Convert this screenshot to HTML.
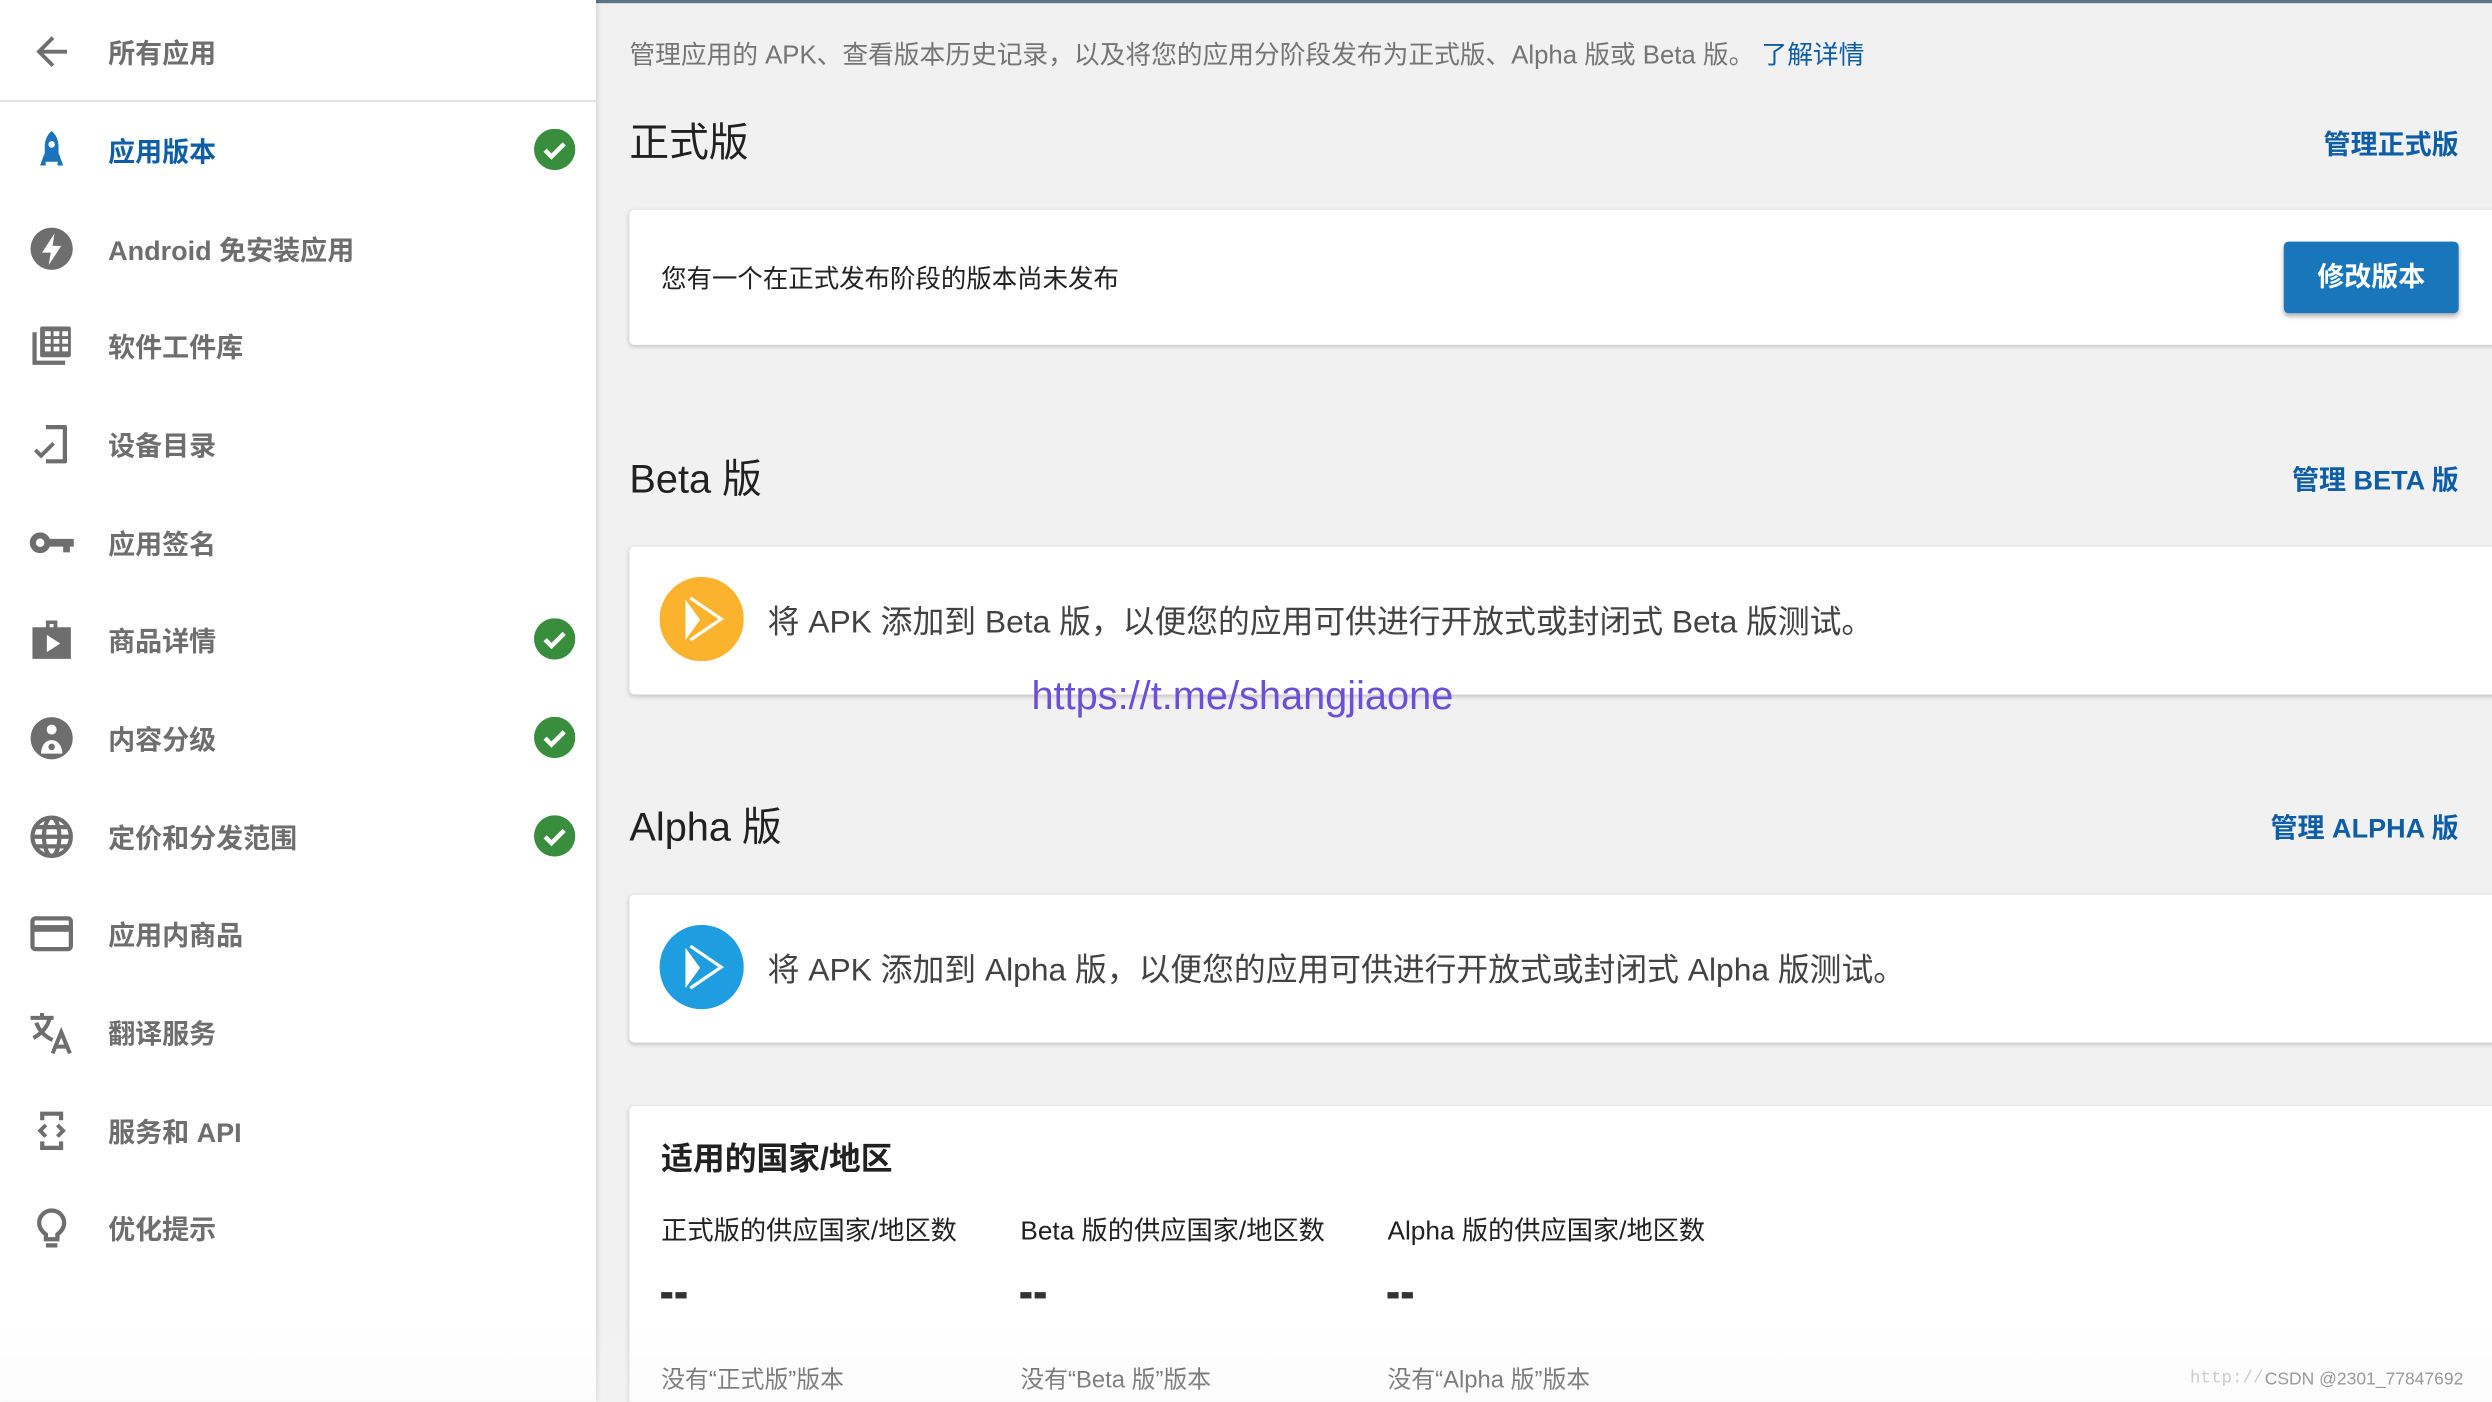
<!DOCTYPE html>
<html><head><meta charset="utf-8"><style>
*{margin:0;padding:0;box-sizing:border-box}
html,body{width:2492px;height:1402px;overflow:hidden;background:#f1f1f1}
#root{position:absolute;left:0;top:0;width:1568px;height:882px;overflow:hidden;transform:scale(1.5893);transform-origin:0 0;font-family:"Liberation Sans","Noto Sans CJK SC",sans-serif;background:#f1f1f1}
.abs{position:absolute;white-space:nowrap}
#side{position:absolute;left:0;top:0;width:375px;height:882px;background:#fff;box-shadow:1px 0 3px rgba(0,0,0,.15)}
.it{position:absolute;left:0;width:375px;height:40px}
.it .t{position:absolute;left:68px;top:50%;transform:translateY(-50%);font-size:17px;font-weight:bold;color:#6e6e6e}
.it svg.ic{position:absolute;left:18px;top:6px;width:29px;height:29px}
.chk{position:absolute;left:336px;top:7px;width:26px;height:26px}
.card{position:absolute;left:396px;width:1180px;background:#fff;border-radius:3px;box-shadow:0 1px 3px rgba(0,0,0,.2)}
.h{font-size:25px;color:#212121}
.mg{font-size:17px;font-weight:bold;color:#0d5ea6;right:21px}
</style></head><body><div id="root">
<div class="abs" style="left:375px;top:0;width:1193px;height:2px;background:#5a7485"></div>
<div id="side">
<div style="position:absolute;left:0;top:63px;width:375px;height:1px;background:#ddd"></div>
<div class="it" style="top:12px"><svg class="ic" viewBox="0 0 24 24"><path d="M20 11H7.8l5.6-5.6L12 4l-8 8 8 8 1.4-1.4L7.8 13H20z" fill="#6e6e6e"/></svg><span class="t">所有应用</span></div>
<div class="it" style="top:74px"><svg class="ic" viewBox="0 0 24 24"><path d="M12 2c-2.5 2-3.6 5-3.6 8.5V18h7.2v-7.5C15.6 7 14.5 4 12 2z" fill="#1a73bb"/><circle cx="12" cy="9" r="1.7" fill="#fff"/><path d="M8.3 13.5L6 20h3zM15.7 13.5L18 20h-3z" fill="#1a73bb"/></svg><span class="t" style="color:#0d5ea6">应用版本</span><svg class="chk" viewBox="0 0 26 26"><circle cx="13" cy="13" r="13" fill="#388e3c"/><path d="M7 13.5l4 4 8-8" stroke="#fff" stroke-width="2.8" fill="none"/></svg></div>
<div class="it" style="top:136px"><svg class="ic" viewBox="0 0 24 24"><circle cx="12" cy="12" r="11" fill="#6e6e6e"/><path d="M13.5 4l-6.5 10h4.5l-1 6.5 6.5-10h-4.5z" fill="#fff"/></svg><span class="t">Android 免安装应用</span></div>
<div class="it" style="top:197px"><svg class="ic" viewBox="0 0 24 24"><path d="M2 5h2.2v14.8H19V22H2z" fill="#6e6e6e"/><rect x="6" y="2" width="16" height="16" rx="1" fill="#6e6e6e"/><path d="M8.5 4.5h3v2.5h-3zm4.5 0h3v2.5h-3zm4.5 0h3v2.5h-3zM8.5 8.5h3V11h-3zm4.5 0h3V11h-3zm4.5 0h3V11h-3zM8.5 12.5h3V15h-3zm4.5 0h3V15h-3zm4.5 0h3V15h-3z" fill="#fff"/></svg><span class="t">软件工件库</span></div>
<div class="it" style="top:259px"><svg class="ic" viewBox="0 0 24 24"><path d="M9 2h10a1 1 0 011 1v18a1 1 0 01-1 1H9v-2.2h8.8V4.2H9z" fill="#6e6e6e"/><path d="M3.5 15l3 3 6.5-6.5" stroke="#6e6e6e" stroke-width="2" fill="none"/></svg><span class="t">设备目录</span></div>
<div class="it" style="top:321px"><svg class="ic" viewBox="0 0 24 24"><circle cx="6" cy="12" r="3.8" fill="none" stroke="#6e6e6e" stroke-width="3.2"/><path d="M9.5 10h14v4h-2v3h-3.5v-3h-8.5z" fill="#6e6e6e"/></svg><span class="t">应用签名</span></div>
<div class="it" style="top:382px"><svg class="ic" viewBox="0 0 24 24"><path d="M9 2h6v3.5h7V22H2V5.5h7zm2 1.8v1.7h2V3.8z" fill="#6e6e6e"/><path d="M9.5 9.5v9l7-4.5z" fill="#fff"/></svg><span class="t">商品详情</span><svg class="chk" viewBox="0 0 26 26"><circle cx="13" cy="13" r="13" fill="#388e3c"/><path d="M7 13.5l4 4 8-8" stroke="#fff" stroke-width="2.8" fill="none"/></svg></div>
<div class="it" style="top:444px"><svg class="ic" viewBox="0 0 24 24"><circle cx="12" cy="12" r="11" fill="#6e6e6e"/><circle cx="12" cy="7.5" r="2.6" fill="#fff"/><path d="M6.5 20c0-4 2.2-7 5.5-7s5.5 3 5.5 7z" fill="#fff"/><circle cx="12" cy="16.5" r="1.7" fill="#6e6e6e"/></svg><span class="t">内容分级</span><svg class="chk" viewBox="0 0 26 26"><circle cx="13" cy="13" r="13" fill="#388e3c"/><path d="M7 13.5l4 4 8-8" stroke="#fff" stroke-width="2.8" fill="none"/></svg></div>
<div class="it" style="top:506px"><svg class="ic" viewBox="0 0 24 24" fill="none" stroke="#6e6e6e" stroke-width="2.2"><circle cx="12" cy="12" r="10"/><ellipse cx="12" cy="12" rx="4" ry="10"/><path d="M2 12h20M3.5 7h17M3.5 17h17"/></svg><span class="t">定价和分发范围</span><svg class="chk" viewBox="0 0 26 26"><circle cx="13" cy="13" r="13" fill="#388e3c"/><path d="M7 13.5l4 4 8-8" stroke="#fff" stroke-width="2.8" fill="none"/></svg></div>
<div class="it" style="top:567px"><svg class="ic" viewBox="0 0 24 24"><rect x="2" y="4" width="20" height="16" rx="1.5" fill="none" stroke="#6e6e6e" stroke-width="2.2"/><rect x="2" y="7.5" width="20" height="3.5" fill="#6e6e6e"/></svg><span class="t">应用内商品</span></div>
<div class="it" style="top:629px"><svg class="ic" viewBox="0 0 24 24" fill="none" stroke="#6e6e6e" stroke-width="2.1"><path d="M1 4.5h12M7 2v2.5M2.5 15c4.5-2.5 7.5-6 8.5-10.5M4 7c1.5 4 4 7 8.5 9M12.5 23l4.5-11 4.5 11M14 19.5h6"/></svg><span class="t">翻译服务</span></div>
<div class="it" style="top:691px"><svg class="ic" viewBox="0 0 24 24"><path d="M6 2h12v4.5h-2.2V4.2H8.2v2.3H6zM6 17.5h2.2v2.3h7.6v-2.3H18V22H6z" fill="#6e6e6e"/><path d="M9 9l-3 3 3 3M15 9l3 3-3 3" stroke="#6e6e6e" stroke-width="2" fill="none"/></svg><span class="t">服务和 API</span></div>
<div class="it" style="top:752px"><svg class="ic" viewBox="0 0 24 24" fill="none" stroke="#6e6e6e" stroke-width="2.2"><path d="M9 18v-2.5C7 14 5.5 12 5.5 9.5a6.5 6.5 0 0113 0c0 2.5-1.5 4.5-3.5 6V18zM9 21.2h6"/></svg><span class="t">优化提示</span></div>
</div>

<div class="abs" style="left:396px;top:21px;font-size:16.2px;color:#757575">管理应用的 APK、查看版本历史记录，以及将您的应用分阶段发布为正式版、Alpha 版或 Beta 版。 <span style="color:#0d5ea6">了解详情</span></div>

<div class="abs h" style="left:396px;top:70px">正式版</div>
<div class="abs mg" style="top:77px">管理正式版</div>
<div class="card" style="top:132px;height:85px">
<div class="abs" style="left:20px;top:30px;font-size:16px;color:#212121">您有一个在正式发布阶段的版本尚未发布</div>
<div class="abs" style="left:1041px;top:20px;width:110px;height:45px;background:#1976bb;border-radius:3px;box-shadow:0 2px 3px rgba(0,0,0,.3);color:#fff;font-weight:bold;font-size:17px;text-align:center;line-height:45px">修改版本</div>
</div>

<div class="abs h" style="left:396px;top:282px">Beta 版</div>
<div class="abs mg" style="top:288px">管理 BETA 版</div>
<div class="card" style="top:344px;height:93px">
<svg class="abs" style="left:19px;top:19px" width="53" height="53" viewBox="0 0 52 52"><circle cx="26" cy="26" r="26" fill="#fbb22d"/><path d="M16 14v25l9-12.5z" fill="#fff"/><path d="M19 13l19 13-19 13" stroke="#fff" stroke-width="2" fill="none"/></svg>
<div class="abs" style="left:87px;top:31px;font-size:20px;color:#424242">将 APK 添加到 Beta 版，以便您的应用可供进行开放式或封闭式 Beta 版测试。</div>
</div>
<div class="abs" style="left:649px;top:424px;font-size:25px;color:#6a4fd8">https://t.me/shangjiaone</div>

<div class="abs h" style="left:396px;top:501px">Alpha 版</div>
<div class="abs mg" style="top:507px">管理 ALPHA 版</div>
<div class="card" style="top:563px;height:93px">
<svg class="abs" style="left:19px;top:19px" width="53" height="53" viewBox="0 0 52 52"><circle cx="26" cy="26" r="26" fill="#1e9de0"/><path d="M16 14v25l9-12.5z" fill="#fff"/><path d="M19 13l19 13-19 13" stroke="#fff" stroke-width="2" fill="none"/></svg>
<div class="abs" style="left:87px;top:31px;font-size:20px;color:#424242">将 APK 添加到 Alpha 版，以便您的应用可供进行开放式或封闭式 Alpha 版测试。</div>
</div>

<div class="card" style="top:696px;height:200px">
<div class="abs" style="left:20px;top:17px;font-size:20px;font-weight:bold;color:#212121">适用的国家/地区</div>
<div class="abs" style="left:20px;top:65px;font-size:16.5px;color:#212121">正式版的供应国家/地区数</div>
<div class="abs" style="left:246px;top:65px;font-size:16.5px;color:#212121">Beta 版的供应国家/地区数</div>
<div class="abs" style="left:477px;top:65px;font-size:16.5px;color:#212121">Alpha 版的供应国家/地区数</div>
<div class="abs" style="left:20px;top:117px;width:7px;height:4px;background:#333"></div><div class="abs" style="left:29px;top:117px;width:7px;height:4px;background:#333"></div>
<div class="abs" style="left:246px;top:117px;width:7px;height:4px;background:#333"></div><div class="abs" style="left:255px;top:117px;width:7px;height:4px;background:#333"></div>
<div class="abs" style="left:477px;top:117px;width:7px;height:4px;background:#333"></div><div class="abs" style="left:486px;top:117px;width:7px;height:4px;background:#333"></div>
<div class="abs" style="left:20px;top:161px;font-size:15px;color:#555">没有“正式版”版本</div>
<div class="abs" style="left:246px;top:161px;font-size:15px;color:#555">没有“Beta 版”版本</div>
<div class="abs" style="left:477px;top:161px;font-size:15px;color:#555">没有“Alpha 版”版本</div>
</div>
<div class="abs" style="left:0;top:830px;width:1568px;height:52px;background:linear-gradient(rgba(250,250,250,0),rgba(245,245,245,.35))"></div>
<div class="abs" style="left:1378px;top:862px;font-size:11px;color:#ccc;font-family:'Liberation Mono',monospace">http://</div>
<div class="abs" style="left:1425px;top:862px;font-size:11px;color:#999">CSDN @2301_77847692</div>
</div></body></html>
